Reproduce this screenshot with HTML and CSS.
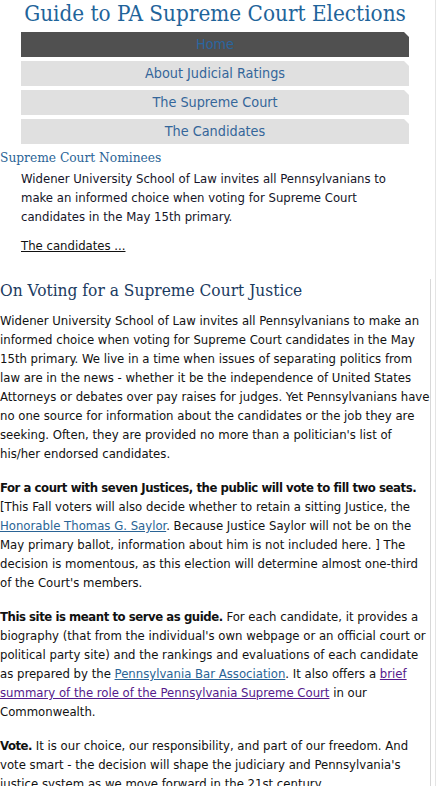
FILE: index.html
```html
<!DOCTYPE html>
<html>
<head>
<meta charset="utf-8">
<link rel="stylesheet" href="styles.css">
</head>
<body>
<div class="page">
  <header class="masthead">
    <h1 class="site-title">Guide to PA Supreme Court Elections</h1>
    <nav class="menu">
      <a class="menu-item active" href="#">Home</a>
      <a class="menu-item" href="#">About Judicial Ratings</a>
      <a class="menu-item" href="#">The Supreme Court</a>
      <a class="menu-item" href="#">The Candidates</a>
    </nav>
  </header>
  <section class="nominees">
    <h2 class="nominees-title">Supreme Court Nominees</h2>
    <p class="nominees-text">Widener University School of Law invites all Pennsylvanians to make an informed choice when voting for Supreme Court candidates in the May 15th primary.</p>
    <p class="nominees-text"><a class="more-link" href="#">The candidates ...</a></p>
  </section>
  <section class="content">
    <h2 class="content-title">On Voting for a Supreme Court Justice</h2>
    <p>Widener University School of Law invites all Pennsylvanians to make an informed choice when voting for Supreme Court candidates in the May 15th primary. We live in a time when issues of separating politics from law are in the news - whether it be the independence of United States Attorneys or debates over pay raises for judges. Yet Pennsylvanians have no one source for information about the candidates or the job they are seeking. Often, they are provided no more than a politician's list of his/her endorsed candidates.</p>
    <p><strong>For a court with seven Justices, the public will vote to fill two seats.</strong> [This Fall voters will also decide whether to retain a sitting Justice, the <a class="link" href="#">Honorable Thomas G. Saylor</a>. Because Justice Saylor will not be on the May primary ballot, information about him is not included here. ] The decision is momentous, as this election will determine almost one-third of the Court's members.</p>
    <p><strong>This site is meant to serve as guide.</strong> For each candidate, it provides a biography (that from the individual's own webpage or an official court or political party site) and the rankings and evaluations of each candidate as prepared by the <a class="link" href="#">Pennsylvania Bar Association</a>. It also offers a <a class="link visited" href="#">brief summary of the role of the Pennsylvania Supreme Court</a> in our Commonwealth.</p>
    <p><strong>Vote.</strong> It is our choice, our responsibility, and part of our freedom. And vote smart - the decision will shape the judiciary and Pennsylvania's justice system as we move forward in the 21st century.</p>
  </section>
</div>
</body>
</html>
```
FILE: styles.css
```css
html, body {
  margin: 0;
  padding: 0;
  background: #fff;
}
body {
  font-family: "DejaVu Sans Condensed", "DejaVu Sans", Tahoma, sans-serif;
  font-stretch: semi-condensed;
  font-size: 13px;
  line-height: 19px;
  color: #111;
  overflow: hidden;
}
.page {
  width: 435px;
  height: 786px;
  overflow: hidden;
  border-right: 1px solid #e4e4e4;
}
.masthead {
  width: 430px;
}
.site-title {
  margin: 0;
  font-family: "DejaVu Serif Condensed", "DejaVu Serif", Georgia, serif;
  font-stretch: semi-condensed;
  font-weight: normal;
  font-size: 22.3px;
  line-height: 26px;
  color: #1f649a;
  text-align: center;
  height: 32px;
}
.menu {
  display: flex;
  flex-direction: column;
  gap: 4px;
  margin: 0 21px;
}
.menu-item {
  display: block;
  height: 25px;
  line-height: 25px;
  background: #e0e0e0;
  color: #34669a;
  text-align: center;
  text-decoration: none;
  font-size: 14.3px;
  clip-path: polygon(0 0, calc(100% - 5px) 0, 100% 5px, 100% 100%, 0 100%);
}
.menu-item.active {
  background: #505050;
  color: #2a66a0;
}
.nominees {
  width: 430px;
  padding-top: 4px;
}
.nominees-title {
  margin: 0;
  font-family: "DejaVu Serif Condensed", "DejaVu Serif", Georgia, serif;
  font-stretch: semi-condensed;
  font-weight: normal;
  font-size: 13.6px;
  line-height: 19px;
  color: #2a6496;
}
.nominees-text {
  margin: 2px 21px 10px;
  color: #141428;
}
.more-link {
  color: #111;
}
.content {
  width: 430px;
  border-right: 1px solid #d8d8d8;
  margin-top: 24px;
}
.content-title {
  margin: 0 0 10px;
  font-family: "DejaVu Serif Condensed", "DejaVu Serif", Georgia, serif;
  font-stretch: semi-condensed;
  font-weight: normal;
  font-size: 17.2px;
  line-height: 22px;
  color: #1b3b5f;
}
.content p {
  margin: 0 0 15px;
}
.content strong {
  letter-spacing: -0.45px;
}
.link {
  color: #2a6496;
}
.link.visited {
  color: #551a8b;
}
```
